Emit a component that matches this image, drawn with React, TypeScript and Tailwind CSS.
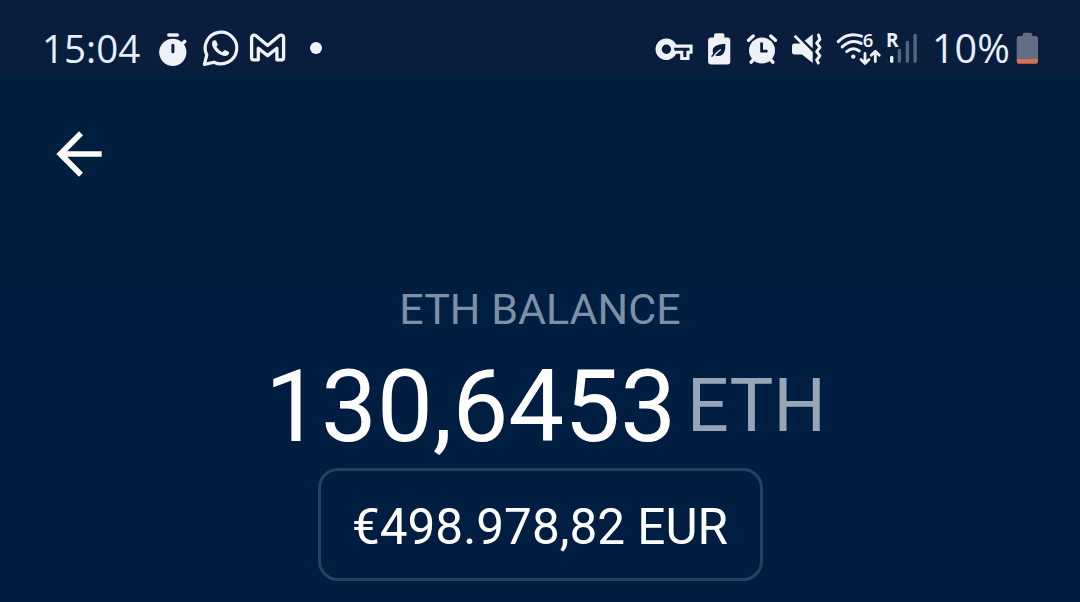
import React from 'react';
import { MdArrowBack } from 'react-icons/md';

export default function App() {
  return (
    <div className="w-[1080px] h-[602px] overflow-hidden bg-[#001e41] font-[Roboto,sans-serif] text-white flex flex-col">
      <StatusBar />

      {/* Header */}
      <header className="h-[209px] shrink-0 bg-[#001e3d] pl-[45px] pt-[46px]">
        <button type="button" aria-label="Back" className="block">
          <MdArrowBack size={68} />
        </button>
      </header>

      {/* Balance */}
      <main className="flex flex-col items-center">
        <h1 className="mt-px h-[50px] leading-[50px] text-[43px] text-[#7e8fa8] whitespace-nowrap">ETH BALANCE</h1>
        <div className="mt-[13px] h-[121px] ml-[11px] flex items-start whitespace-nowrap">
          <span className="text-[99.5px] leading-[121px]">130,6453</span>
          <span className="ml-[11px] text-[73.5px] leading-[119px] text-[#98a5b7]">ETH</span>
        </div>
        <button
          type="button"
          className="w-[445px] h-[113px] pt-[6px] rounded-[20px] border-3 border-[#29405f] text-[49.5px] leading-none whitespace-nowrap"
        >
          €498.978,82 EUR
        </button>
      </main>
    </div>
  );
}

function StatusBar() {
  return (
    <div className="h-[74px] shrink-0 bg-[#091e3c] pt-7 pl-[42px] pr-[40px] flex items-start justify-between text-[#e4efff]">
      <div className="flex items-start">
        <span className="w-[116px] font-[Open_Sans,sans-serif] text-[38.5px] leading-10 whitespace-nowrap">15:04</span>
        <StopwatchIcon />
        <WhatsappIcon />
        <GmailIcon />
        <span className="ml-[22px] mt-[14px] size-3 rounded-full bg-[#eef2f8]" />
      </div>
      <div className="flex items-start">
        <KeyIcon />
        <EcoBatteryIcon />
        <AlarmIcon />
        <MuteIcon />
        <WifiIcon />
        <SignalIcon />
        <span className="w-[83px] font-[Open_Sans,sans-serif] text-[39.5px] leading-10 whitespace-nowrap">10%</span>
        <BatteryIcon />
      </div>
    </div>
  );
}

function Icon({ width, className = '', children }: { width: number; className?: string; children: React.ReactNode }) {
  return (
    <svg width={width} height={40} viewBox={`0 0 ${width} 40`} className={`shrink-0 overflow-visible ${className}`} fill="none">
      {children}
    </svg>
  );
}

function StopwatchIcon() {
  return (
    <Icon width={30}>
      <circle cx="14.8" cy="24.3" r="13.6" fill="#eef2f8" />
      <path d="M10.8 7h8.6" stroke="#eef2f8" strokeWidth="3.4" strokeLinecap="round" />
      <path d="M23.5 16.5l3.2-3" stroke="#eef2f8" strokeWidth="3.6" strokeLinecap="round" />
      <path d="M14.9 17.3v6.4" stroke="#0a1e3c" strokeWidth="3" strokeLinecap="round" />
    </Icon>
  );
}

function WhatsappIcon() {
  return (
    <Icon width={38} className="ml-[14px]">
      <path d="M2.4 36.4L4.8 27A15.8 15.8 0 1 1 12 34.2Z" stroke="#eef2f8" strokeWidth="3.2" strokeLinejoin="round" />
      <path
        d="M10.5 13.3q1.5-1.8 3.5-.8l1.8 4q0 1.1-1.4 2.3 2.1 3.7 6 5.4l1.6-1.8q.8-.6 1.6-.1l3.4 1.7q.6 1.5-1 3-2 1.6-5.5.6-7.5-3.1-10.2-9.6-.8-2.7.2-4.7z"
        fill="#eef2f8"
      />
    </Icon>
  );
}

function GmailIcon() {
  return (
    <Icon width={39} className="ml-[9px]">
      <path
        d="M2.6 9.8v20q0 2 2 2h4.7V20.2l9.3 7.4 9.3-7.4v11.6h4.7q2 0 2-2v-20q0-2.6-2.6-2.6-1 0-1.8.6l-11.6 9.800-11.600-9.800q-.8-.6-1.800-.6-2.600 0-2.600 2.600z"
        stroke="#eef2f8"
        strokeWidth="3.3"
        strokeLinejoin="round"
      />
    </Icon>
  );
}

function KeyIcon() {
  return (
    <Icon width={40}>
      <path
        fillRule="evenodd"
        d="M35.5 32h-9.3v-6.2h-4.1A10.8 10.8 0 1 1 22.1 16.6H38.6v9.2h-3.1zM12.4 16.5a4.7 4.7 0 1 0 0 9.4 4.7 4.7 0 0 0 0-9.4zM20 19.7l.5 3h8.8v6.2h3.1v-6.2h3.1v-3z"
        fill="#eef2f8"
      />
    </Icon>
  );
}

function EcoBatteryIcon() {
  return (
    <Icon width={25} className="ml-[13px]">
      <path d="M7 9.6V7.2q0-1.9 1.9-1.9h6.6q1.9 0 1.9 1.9v2.4h3q2.9 0 2.9 2.9v21q0 2.9-2.9 2.9H4q-2.9 0-2.9-2.9v-21q0-2.9 2.9-2.9z" fill="#eef2f8" />
      <path d="M18.3 15.7q.6 12.3-7.1 12.3-5.6 0-5.6-5.2 0-6.5 12.7-7.1z" fill="#0a1e3c" />
      <path d="M4.6 28.6q4-5.6 8.6-8" stroke="#0a1e3c" strokeWidth="1.6" />
      <path d="M7.4 27.3q3-3.6 6.4-5.8" stroke="#eef2f8" strokeWidth="1.3" />
    </Icon>
  );
}

function AlarmIcon() {
  return (
    <Icon width={32} className="ml-[14px]">
      <circle cx="16" cy="22.5" r="13" fill="#eef2f8" />
      <path d="M2.6 12.3l4.6-4.3M24.8 8l4.6 4.3M7.5 31.5l-2.3 2.7M24.5 31.5l2.3 2.7" stroke="#eef2f8" strokeWidth="3.4" strokeLinecap="round" />
      <path d="M15.6 14.5v8.7h5.9" stroke="#0a1e3c" strokeWidth="2.8" />
    </Icon>
  );
}

function MuteIcon() {
  return (
    <Icon width={33} className="ml-3">
      <path d="M2 18q0-2.5 2.5-2.5h6L3.7 8.7l1.9-2L22.7 24v11L12 26.5H4.5Q2 26.5 2 24zM14.7 12.7l8-6.4v14.2z" fill="#eef2f8" />
      <path d="M28.5 7l1.4 4.2-3.2 4 3.2 4.2-3.2 4.2 3.2 4.2-3.2 4.2 1.6 3" stroke="#eef2f8" strokeWidth="3" strokeLinejoin="round" strokeLinecap="round" />
    </Icon>
  );
}

function WifiIcon() {
  return (
    <Icon width={46} className="ml-[13px]">
      <path d="M2.2 13.6Q12 3.4 25.5 8.2M6.2 18.9q9.5-8.8 19-3.5M10.7 23.6q6.6-5.3 12.6-.6" stroke="#eef2f8" strokeWidth="3" strokeLinecap="round" />
      <circle cx="17.3" cy="28.6" r="2.2" fill="#eef2f8" />
      <text x="26.8" y="18.7" fontSize="18.5" fontWeight="600" fontFamily="Open Sans, sans-serif" fill="#eef2f8">6</text>
      <path d="M29 25.5v9.3M25 31.5l4 3.9 4-3.9M39.3 33.5v-9.3M35.3 27.2l4-3.9 4 3.9" stroke="#eef2f8" strokeWidth="2.8" strokeLinecap="round" strokeLinejoin="round" />
    </Icon>
  );
}

function SignalIcon() {
  return (
    <Icon width={34} className="ml-[3px] mr-[13px]">
      <text x="1" y="18.7" fontSize="19" fontWeight="700" fontFamily="Open Sans, sans-serif" fill="#eef2f8">R</text>
      <path d="M6.7 29.5v3.7" stroke="#eef2f8" strokeWidth="3.4" strokeLinecap="round" />
      <path d="M14.4 22.5v10.7M22.4 14.5v18.7M30.1 7.5v25.7" stroke="#56657f" strokeWidth="3.4" strokeLinecap="round" />
    </Icon>
  );
}

function BatteryIcon() {
  return (
    <Icon width={25}>
      <path d="M7.7 8V6.5q0-1.8 1.8-1.8h6q1.8 0 1.8 1.8V8h2.9Q23 8 23 10.8V31H1.7V10.8Q1.7 8 4.5 8z" fill="#626e84" />
      <path d="M1.7 31H23v1.9q0 2.9-2.9 2.9H4.6q-2.9 0-2.9-2.9z" fill="#d86f52" />
    </Icon>
  );
}
